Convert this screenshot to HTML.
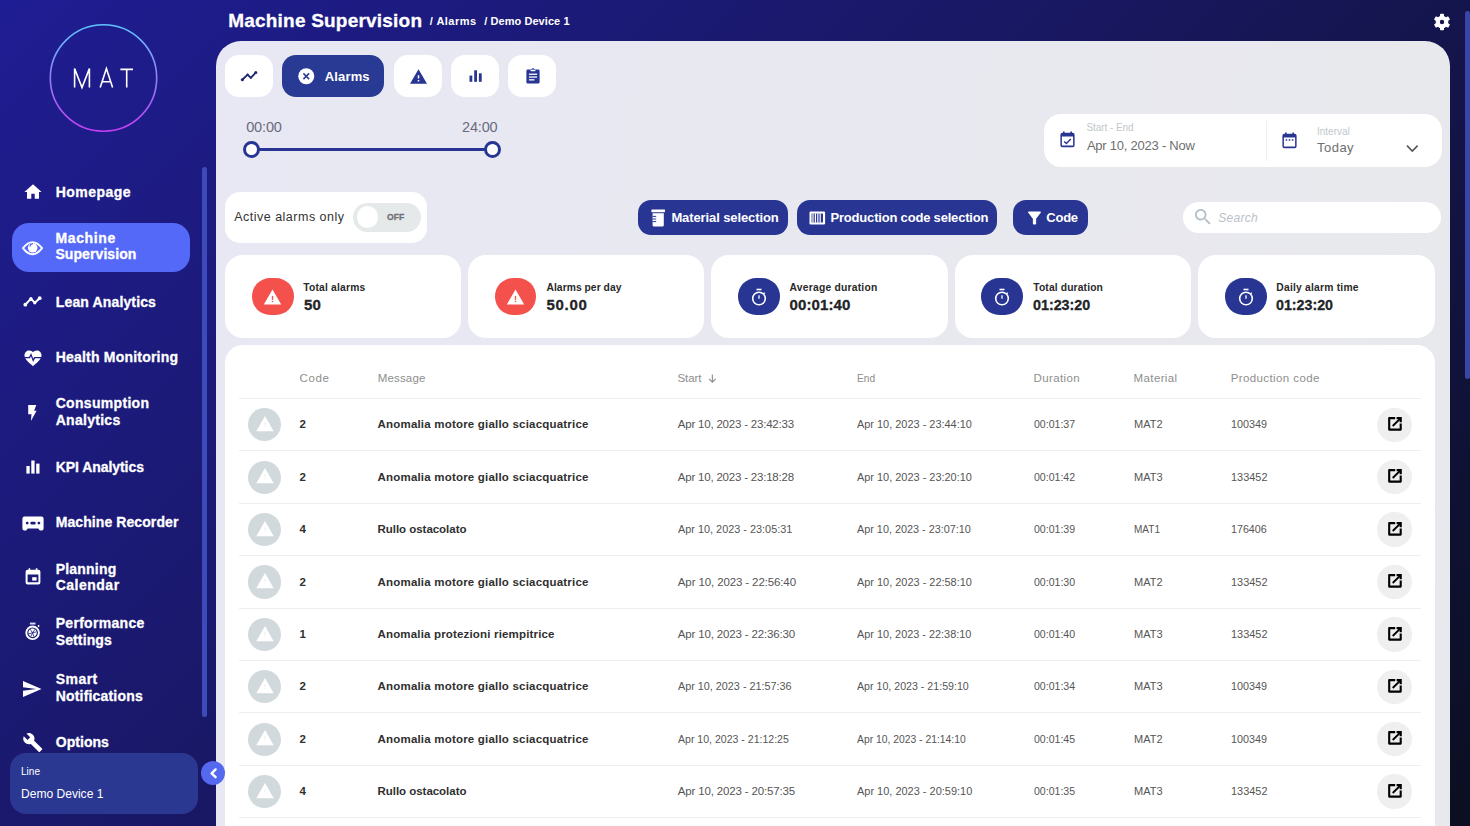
<!DOCTYPE html>
<html><head><meta charset="utf-8">
<style>
*{margin:0;padding:0;box-sizing:border-box}
html,body{width:1470px;height:826px;overflow:hidden}
body{position:relative;font-family:"Liberation Sans",sans-serif;background:linear-gradient(135deg,#1f1d93 0%,#18175e 50%,#0b0f20 100%);}
.a{position:absolute}
.t{position:absolute;white-space:nowrap}
.s{position:absolute;overflow:visible}
.panel{position:absolute;left:216px;top:41px;width:1234px;height:800px;background:linear-gradient(100deg,#e7e8f3 0%,#e8e8f0 50%,#e8e9ec 100%);border-radius:25px 25px 0 0}
.wbtn{position:absolute;top:55px;width:48px;height:42px;background:#fff;border-radius:14px}
.card{position:absolute;background:#fff;border-radius:18px}
.fbtn{position:absolute;top:200px;height:35px;background:#283593;border-radius:13px}
.sep{position:absolute;left:239px;width:1182px;height:1px;background:#eceff1}
.ric{position:absolute;left:247px;width:34px;height:34px;border-radius:50%;background:#d2d9dd}
.ebtn{position:absolute;left:1377.5px;width:34.5px;height:34.5px;border-radius:50%;background:#efefef}
</style></head><body>

<svg class="s" style="left:0;top:0" width="210" height="160">
<defs><linearGradient id="lg" x1="0" y1="0" x2="0" y2="1"><stop offset="0" stop-color="#5ec4ff"/><stop offset="1" stop-color="#c53cf2"/></linearGradient></defs>
<circle cx="103.5" cy="78" r="53.2" fill="none" stroke="url(#lg)" stroke-width="1.6"/>
<g stroke="#fff" stroke-width="1.6" fill="none" stroke-linejoin="miter" stroke-linecap="butt">
<path d="M74.6 87.6V68.6L82 87.6 89.4 68.6V87.6"/>
<path d="M100.2 87.6L106.4 68.6 112.6 87.6M102.4 81.8H110.4"/>
<path d="M120.4 69.4H133M126.7 69.4V87.6"/>
</g>
</svg>
<div class="a" style="left:202px;top:167px;width:5px;height:550px;background:#3d4ab9;border-radius:3px"></div>
<div class="a" style="left:12.3px;top:223.1px;width:177.9px;height:48.5px;background:#5569f8;border-radius:17px"></div>
<svg class="s" style="left:23.5px;top:182.5px" width="18" height="17" viewBox="1.5 2.5 21 18" fill="#fff"><path d="M10 20v-6h4v6h5v-8h3L12 3 2 12h3v8z"/></svg>
<svg class="s" style="left:0;top:230px" width="50" height="30"><g transform="translate(0,-230)"><path d="M22.9 248.2Q32.5 236 42.1 248.2Q32.5 260.4 22.9 248.2Z" stroke="#fff" stroke-width="1.9" fill="none" stroke-linejoin="round"/><circle cx="32.7" cy="247.8" r="4.8" fill="#fff"/><path d="M30 246.2A3.2 3.2 0 0 1 32.6 243.6" stroke="#5468f0" stroke-width="1.2" fill="none" stroke-linecap="round"/></g></svg>
<svg class="s" style="left:0;top:280px" width="50" height="40"><g transform="translate(0,-280)"><path d="M25.3 304.7L30.9 298.6 34.8 302.8 39.7 298.2" stroke="#fff" stroke-width="2" fill="none" stroke-linejoin="round"/><circle cx="25.3" cy="304.7" r="1.9" fill="#fff"/><circle cx="30.9" cy="298.6" r="1.6" fill="#fff"/><circle cx="34.8" cy="302.8" r="1.6" fill="#fff"/><circle cx="39.7" cy="298.2" r="1.9" fill="#fff"/></g></svg>
<svg class="s" style="left:23.5px;top:350px" width="18" height="17" viewBox="0 0 18 17"><path d="M9 16.2L7.8 15.1C3.4 11.2 0.5 8.6 0.5 5.2 0.5 2.5 2.6 0.4 5.3 0.4c1.5 0 2.9.7 3.7 1.8C9.8 1.1 11.2.4 12.7.4c2.7 0 4.8 2.1 4.8 4.8 0 3.4-2.9 6-7.3 9.9z" fill="#fff"/><path d="M0.5 7.6H5.6L7 4.6 9.2 10.4 10.6 7.6H17.5" stroke="#1e1c86" stroke-width="1.3" fill="none"/></svg>
<svg class="s" style="left:0;top:400px" width="50" height="25"><g transform="translate(0,-400)"><path d="M28.2 405H36.3L34.1 410.8H36.6L30.9 421.1 31.5 414.3H28.2Z" fill="#fff"/></g></svg>
<svg class="s" style="left:25.5px;top:459.5px" width="14" height="14"><rect x="0.4" y="6" width="3.3" height="7.6" fill="#fff"/><rect x="5.3" y="0.5" width="3.3" height="13.1" fill="#fff"/><rect x="10.2" y="3.6" width="3.3" height="10" fill="#fff"/></svg>
<svg class="s" style="left:21.5px;top:515.5px" width="22" height="15" viewBox="0 0 22 15"><path d="M2.5 0.4H19.5A2.1 2.1 0 0 1 21.6 2.5V12.6A2 2 0 0 1 19.6 14.6H17.8L16.3 12.4H5.7L4.2 14.6H2.4A2 2 0 0 1 0.4 12.6V2.5A2.1 2.1 0 0 1 2.5 0.4z" fill="#fff"/><circle cx="5.2" cy="7.1" r="1.4" fill="#1c1a7c"/><circle cx="16.9" cy="7.1" r="1.4" fill="#1c1a7c"/><rect x="8.4" y="5.7" width="5.2" height="2.8" rx="1.2" fill="#1c1a7c"/></svg>
<svg class="s" style="left:25px;top:567.5px" width="16" height="17" viewBox="0 0 16 17"><path d="M3.6 0.3H5.2V1.8H10.8V0.3H12.4V1.8H13.4A2 2 0 0 1 15.4 3.8V14.4A2 2 0 0 1 13.4 16.4H2.6A2 2 0 0 1 0.6 14.4V3.8A2 2 0 0 1 2.6 1.8H3.6z M2.6 6.4V14.2H13.4V6.4z" fill="#fff" fill-rule="evenodd"/><rect x="7.2" y="9.2" width="4.4" height="3.4" fill="#fff"/></svg>
<svg class="s" style="left:24px;top:622px" width="18" height="18" viewBox="0 0 18 18"><rect x="5.9" y="0.6" width="5.6" height="1.9" fill="#d8dcff"/><circle cx="8.6" cy="10.8" r="6.3" stroke="#fff" stroke-width="1.9" fill="none"/><path d="M14 4.6l1.2-1.2" stroke="#fff" stroke-width="1.6"/><circle cx="8.6" cy="10.8" r="4.2" fill="#fff"/><path d="M8.6 10.8L6.2 7.3M8.6 10.8L12.6 9.8M8.6 10.8L9.8 14.6M8.6 10.8L4.6 11.8M8.6 10.8L11 7.3M8.6 10.8L6.8 14.5" stroke="#1c1a7c" stroke-width="0.8"/></svg>
<svg class="s" style="left:23.3px;top:680.5px" width="18.5" height="16" viewBox="2 3 21 18" fill="#fff"><path d="M2.01 21L23 12 2.01 3 2 10l15 2-15 2z"/></svg>
<svg class="s" style="left:22.5px;top:732.5px" width="19.5" height="19" viewBox="1 1 22 22" fill="#fff"><path d="M22.7 19l-9.1-9.1c.9-2.3.4-5-1.5-6.9-2-2-5-2.4-7.4-1.3L9 6 6 9 1.6 4.7C.4 7.1.9 10.1 2.9 12.1c1.9 1.9 4.6 2.4 6.9 1.5l9.1 9.1c.4.4 1 .4 1.4 0l2.3-2.3c.5-.4.5-1.1.1-1.4z"/></svg>
<div class="a" style="left:9.5px;top:752.6px;width:188px;height:61px;background:#2b3892;border-radius:16px"></div>
<div class="a" style="left:1465px;top:11px;width:5px;height:368px;background:#3a45a8;border-radius:3px"></div>
<svg class="s" style="left:1425.5px;top:5.7px" width="32" height="32"><g transform="translate(16,16)" fill="#fff"><path fill-rule="evenodd" d="M0 -6.3A6.3 6.3 0 1 1 0 6.3A6.3 6.3 0 1 1 0 -6.3zM0 -2.2A2.2 2.2 0 1 0 0 2.2A2.2 2.2 0 1 0 0 -2.2z"/><rect x="-2" y="-8.2" width="4" height="4.5" rx="0.8" transform="rotate(0)"/><rect x="-2" y="-8.2" width="4" height="4.5" rx="0.8" transform="rotate(60)"/><rect x="-2" y="-8.2" width="4" height="4.5" rx="0.8" transform="rotate(120)"/><rect x="-2" y="-8.2" width="4" height="4.5" rx="0.8" transform="rotate(180)"/><rect x="-2" y="-8.2" width="4" height="4.5" rx="0.8" transform="rotate(240)"/><rect x="-2" y="-8.2" width="4" height="4.5" rx="0.8" transform="rotate(300)"/></g></svg>
<div class="panel"></div>
<div class="a" style="left:200.5px;top:760.5px;width:24.5px;height:24.5px;border-radius:50%;background:#5468f0"></div>
<svg class="s" style="left:200.5px;top:760.5px" width="25" height="25"><path d="M14.6 8.4L10.6 12.3 14.6 16.2" stroke="#fff" stroke-width="2.4" fill="none" stroke-linecap="round" stroke-linejoin="round"/></svg>
<div class="wbtn" style="left:225.3px"></div>
<div class="wbtn" style="left:282px;width:102px;background:#293a94"></div>
<div class="wbtn" style="left:393.6px"></div>
<div class="wbtn" style="left:451px"></div>
<div class="wbtn" style="left:508.3px"></div>
<svg class="s" style="left:240px;top:69px" width="18" height="14"><path d="M2.3 10.8L7.6 5.6 10.8 8.8 15.8 3.6" stroke="#1f2a6b" stroke-width="1.9" fill="none" stroke-linejoin="round"/><circle cx="2.3" cy="10.8" r="1.5" fill="#1f2a6b"/><circle cx="15.8" cy="3.6" r="1.5" fill="#1f2a6b"/><circle cx="7.6" cy="5.6" r="1" fill="#1f2a6b"/><circle cx="10.8" cy="8.8" r="1" fill="#1f2a6b"/></svg>
<svg class="s" style="left:298.3px;top:68.2px" width="16.5" height="16.5" viewBox="0 0 16.5 16.5"><circle cx="8.25" cy="8.25" r="8" fill="#fff"/><path d="M5.4 5.4L11.1 11.1M11.1 5.4L5.4 11.1" stroke="#293a94" stroke-width="1.5"/></svg>
<svg class="s" style="left:409.5px;top:68.5px" width="17" height="15" viewBox="1 2 22 19" fill="#283593"><path d="M1 21h22L12 2 1 21zm12-3h-2v-2h2v2zm0-4h-2v-4h2v4z"/></svg>
<svg class="s" style="left:469px;top:70px" width="13" height="12"><rect x="0.5" y="5.6" width="2.8" height="6.2" fill="#283593"/><rect x="5.2" y="0.3" width="2.8" height="11.5" fill="#283593"/><rect x="9.9" y="3.3" width="2.8" height="8.5" fill="#283593"/></svg>
<svg class="s" style="left:525.5px;top:68px" width="14" height="16" viewBox="0 0 14 16"><path fill="#283593" d="M1.8 1.6H4.8L7 0 9.2 1.6H12.2A1.4 1.4 0 0 1 13.6 3V14.2A1.4 1.4 0 0 1 12.2 15.6H1.8A1.4 1.4 0 0 1 .4 14.2V3A1.4 1.4 0 0 1 1.8 1.6z"/><rect x="2.9" y="5.6" width="8.2" height="1.3" fill="#fff"/><rect x="2.9" y="8.4" width="8.2" height="1.3" fill="#fff"/><rect x="2.9" y="11.2" width="5.6" height="1.3" fill="#fff"/><rect x="4.6" y="1.7" width="4.8" height="1.5" fill="#fff"/></svg>
<div class="a" style="left:251px;top:147.6px;width:241px;height:3.4px;background:#283593"></div>
<div class="a" style="left:243px;top:141px;width:16.8px;height:16.8px;border-radius:50%;border:3.3px solid #283593;background:#fff"></div>
<div class="a" style="left:484px;top:141px;width:16.8px;height:16.8px;border-radius:50%;border:3.3px solid #283593;background:#fff"></div>
<div class="card" style="left:1043.5px;top:114px;width:398px;height:53px;border-radius:17px"></div>
<div class="a" style="left:1265.5px;top:120.5px;width:1px;height:40.5px;background:#efefef"></div>
<svg class="s" style="left:1059.5px;top:131px" width="15" height="17" viewBox="0 0 15 17"><path fill="#283593" fill-rule="evenodd" d="M3 .4H4.6V1.8H10.4V.4H12V1.8H12.6A2 2 0 0 1 14.6 3.8V14.2A2 2 0 0 1 12.6 16.2H2.4A2 2 0 0 1 .4 14.2V3.8A2 2 0 0 1 2.4 1.8H3z M1.9 5.6V14.6H13.1V5.6z"/><path d="M4.2 10.4L6.4 12.5 10.8 8" stroke="#283593" stroke-width="1.4" fill="none"/></svg>
<svg class="s" style="left:1281.5px;top:131.5px" width="15" height="17" viewBox="0 0 15 17"><path fill="#283593" fill-rule="evenodd" d="M3 .4H4.6V1.8H10.4V.4H12V1.8H12.6A2 2 0 0 1 14.6 3.8V14.2A2 2 0 0 1 12.6 16.2H2.4A2 2 0 0 1 .4 14.2V3.8A2 2 0 0 1 2.4 1.8H3z M1.9 5.6V14.6H13.1V5.6z"/><rect x="3.6" y="7.2" width="1.6" height="1.5" fill="#283593"/><rect x="6.7" y="7.2" width="1.6" height="1.5" fill="#283593"/><rect x="9.8" y="7.2" width="1.6" height="1.5" fill="#283593"/></svg>
<svg class="s" style="left:1405px;top:143px" width="15" height="11"><path d="M2 2.6L7.3 8 12.6 2.6" stroke="#555" stroke-width="1.6" fill="none"/></svg>
<div class="card" style="left:225.2px;top:191.7px;width:202px;height:51.3px;border-radius:15px"></div>
<div class="a" style="left:352.8px;top:203.1px;width:68.6px;height:28.8px;border-radius:14.4px;background:#e6e9ea"></div>
<div class="a" style="left:356.6px;top:206.4px;width:21.6px;height:21.6px;border-radius:50%;background:#fff"></div>
<div class="fbtn" style="left:638px;width:150px"></div>
<div class="fbtn" style="left:797px;width:200px"></div>
<div class="fbtn" style="left:1013px;width:75px"></div>
<svg class="s" style="left:650.5px;top:208.5px" width="15" height="18" viewBox="0 0 15 18"><rect x="0.4" y="0.4" width="13.6" height="2.8" rx="0.6" fill="#fff"/><path d="M1.6 4.2H12.8V16.2A1.4 1.4 0 0 1 11.4 17.6H3A1.4 1.4 0 0 1 1.6 16.2z" fill="#fff"/><path d="M1.6 7.4H5.2M1.6 10H5.2M1.6 12.6H5.2" stroke="#283593" stroke-width="1"/></svg>
<svg class="s" style="left:808.5px;top:210.5px" width="17" height="14" viewBox="0 0 17 14"><rect x="0.5" y="0.5" width="15.6" height="13" rx="1.2" fill="#fff"/><rect x="2.6" y="2.6" width="11.4" height="8.8" fill="#283593"/><path d="M4 2.6V11.4M6.4 2.6V11.4M8.8 2.6V11.4M11.2 2.6V11.4" stroke="#fff" stroke-width="1.2"/></svg>
<svg class="s" style="left:1028px;top:210.5px" width="13" height="14" viewBox="4 4 16 16" fill="#fff"><path d="M4.25 5.61C6.27 8.2 10 13 10 13v6c0 .55.45 1 1 1h2c.55 0 1-.45 1-1v-6s3.72-4.8 5.74-7.39c.51-.66.04-1.61-.79-1.61H5.04c-.83 0-1.3.95-.79 1.61z"/></svg>
<div class="card" style="left:1183px;top:202px;width:258px;height:31.2px;border-radius:15.6px"></div>
<svg class="s" style="left:1194.5px;top:208.5px" width="15.5" height="15.5" viewBox="3 3 17.5 17.5" fill="#b3bfc6"><path d="M15.5 14h-.79l-.28-.27C15.41 12.59 16 11.11 16 9.5 16 5.91 13.09 3 9.5 3S3 5.91 3 9.5 5.91 16 9.5 16c1.61 0 3.09-.59 4.23-1.57l.27.28v.79l5 4.99L20.49 19l-4.99-5zm-6 0C7.01 14 5 11.99 5 9.5S7.01 5 9.5 5 14 7.01 14 9.5 11.99 14 9.5 14z"/></svg>
<div class="card" style="left:225.2px;top:255.2px;width:236px;height:82.8px"></div>
<div class="card" style="left:468px;top:255.2px;width:236.3px;height:82.8px"></div>
<div class="card" style="left:711px;top:255.2px;width:237px;height:82.8px"></div>
<div class="card" style="left:954.7px;top:255.2px;width:236.5px;height:82.8px"></div>
<div class="card" style="left:1198px;top:255.2px;width:236.5px;height:82.8px"></div>
<div class="a" style="left:252px;top:278.3px;width:41.7px;height:36.5px;border-radius:18.2px;background:#f4514c"></div>
<svg class="s" style="left:263.35px;top:288.55px" width="19" height="17" viewBox="0 0 19 17"><path d="M9.5 0.55L18.2 15.55H0.8z" fill="#fff"/><rect x="8.85" y="6.9" width="1.3" height="4" fill="#f4514c"/><rect x="8.85" y="11.9" width="1.3" height="1.3" fill="#f4514c"/></svg>
<div class="a" style="left:494.7px;top:278.3px;width:41.7px;height:36.5px;border-radius:18.2px;background:#f4514c"></div>
<svg class="s" style="left:506.05px;top:288.55px" width="19" height="17" viewBox="0 0 19 17"><path d="M9.5 0.55L18.2 15.55H0.8z" fill="#fff"/><rect x="8.85" y="6.9" width="1.3" height="4" fill="#f4514c"/><rect x="8.85" y="11.9" width="1.3" height="1.3" fill="#f4514c"/></svg>
<div class="a" style="left:738.2px;top:278.3px;width:41.7px;height:36.5px;border-radius:18.2px;background:#283593"></div>
<svg class="s" style="left:750.05px;top:287.55px" width="18" height="18" viewBox="0 0 18 18"><rect x="6.5" y="0.7" width="5" height="1.6" fill="#fff"/><circle cx="9" cy="10.5" r="6.3" stroke="#fff" stroke-width="1.6" fill="none"/><path d="M9 10.8V7.2" stroke="#fff" stroke-width="1.3"/><path d="M13.6 5.9l1.2-1.2" stroke="#fff" stroke-width="1.3"/></svg>
<div class="a" style="left:981.4px;top:278.3px;width:41.7px;height:36.5px;border-radius:18.2px;background:#283593"></div>
<svg class="s" style="left:993.25px;top:287.55px" width="18" height="18" viewBox="0 0 18 18"><rect x="6.5" y="0.7" width="5" height="1.6" fill="#fff"/><circle cx="9" cy="10.5" r="6.3" stroke="#fff" stroke-width="1.6" fill="none"/><path d="M9 10.8V7.2" stroke="#fff" stroke-width="1.3"/><path d="M13.6 5.9l1.2-1.2" stroke="#fff" stroke-width="1.3"/></svg>
<div class="a" style="left:1225.1px;top:278.3px;width:41.7px;height:36.5px;border-radius:18.2px;background:#283593"></div>
<svg class="s" style="left:1236.95px;top:287.55px" width="18" height="18" viewBox="0 0 18 18"><rect x="6.5" y="0.7" width="5" height="1.6" fill="#fff"/><circle cx="9" cy="10.5" r="6.3" stroke="#fff" stroke-width="1.6" fill="none"/><path d="M9 10.8V7.2" stroke="#fff" stroke-width="1.3"/><path d="M13.6 5.9l1.2-1.2" stroke="#fff" stroke-width="1.3"/></svg>
<div class="card" style="left:225.3px;top:344.5px;width:1209.7px;height:520px"></div>
<svg class="s" style="left:707.7px;top:374.4px" width="9" height="9"><path d="M4.35 0.4V8.2M1 4.9L4.35 8.2 7.7 4.9" stroke="#8e8e8e" stroke-width="1.15" fill="none"/></svg>
<div class="sep" style="top:398.00px"></div>
<div class="sep" style="top:450.41px"></div>
<div class="sep" style="top:502.82px"></div>
<div class="sep" style="top:555.23px"></div>
<div class="sep" style="top:607.64px"></div>
<div class="sep" style="top:660.05px"></div>
<div class="sep" style="top:712.46px"></div>
<div class="sep" style="top:764.87px"></div>
<div class="sep" style="top:817.28px"></div>
<div class="ric" style="left:247.6px;width:33.2px;height:33.2px;top:408.15px"></div>
<svg class="s" style="left:254.6px;top:414.90px" width="20" height="17" viewBox="0 0 20 17"><path d="M10 1L18.7 16.2H1.3z" fill="#fff"/><rect x="9.6" y="7.2" width="0.8" height="2.6" fill="#dfe4e7"/><rect x="9.6" y="11.1" width="0.8" height="0.9" fill="#dfe4e7"/></svg>
<div class="ebtn" style="left:1377.4px;width:34.4px;height:34.4px;top:407.55px"></div>
<svg class="s" style="left:1386px;top:415.00px" width="18" height="18" viewBox="0 0 18 18"><path d="M9.2 3.1H3.2V14.6H14.7V8.5" stroke="#000" stroke-width="2.1" fill="none" stroke-linejoin="round"/><path d="M10.6 3.1H14.7V7.2" stroke="#000" stroke-width="2.2" fill="none"/><path d="M6.7 11L14.2 3.6" stroke="#000" stroke-width="1.9" fill="none"/></svg>
<div class="ric" style="left:247.6px;width:33.2px;height:33.2px;top:460.56px"></div>
<svg class="s" style="left:254.6px;top:467.31px" width="20" height="17" viewBox="0 0 20 17"><path d="M10 1L18.7 16.2H1.3z" fill="#fff"/><rect x="9.6" y="7.2" width="0.8" height="2.6" fill="#dfe4e7"/><rect x="9.6" y="11.1" width="0.8" height="0.9" fill="#dfe4e7"/></svg>
<div class="ebtn" style="left:1377.4px;width:34.4px;height:34.4px;top:459.96px"></div>
<svg class="s" style="left:1386px;top:467.41px" width="18" height="18" viewBox="0 0 18 18"><path d="M9.2 3.1H3.2V14.6H14.7V8.5" stroke="#000" stroke-width="2.1" fill="none" stroke-linejoin="round"/><path d="M10.6 3.1H14.7V7.2" stroke="#000" stroke-width="2.2" fill="none"/><path d="M6.7 11L14.2 3.6" stroke="#000" stroke-width="1.9" fill="none"/></svg>
<div class="ric" style="left:247.6px;width:33.2px;height:33.2px;top:512.97px"></div>
<svg class="s" style="left:254.6px;top:519.72px" width="20" height="17" viewBox="0 0 20 17"><path d="M10 1L18.7 16.2H1.3z" fill="#fff"/><rect x="9.6" y="7.2" width="0.8" height="2.6" fill="#dfe4e7"/><rect x="9.6" y="11.1" width="0.8" height="0.9" fill="#dfe4e7"/></svg>
<div class="ebtn" style="left:1377.4px;width:34.4px;height:34.4px;top:512.37px"></div>
<svg class="s" style="left:1386px;top:519.82px" width="18" height="18" viewBox="0 0 18 18"><path d="M9.2 3.1H3.2V14.6H14.7V8.5" stroke="#000" stroke-width="2.1" fill="none" stroke-linejoin="round"/><path d="M10.6 3.1H14.7V7.2" stroke="#000" stroke-width="2.2" fill="none"/><path d="M6.7 11L14.2 3.6" stroke="#000" stroke-width="1.9" fill="none"/></svg>
<div class="ric" style="left:247.6px;width:33.2px;height:33.2px;top:565.38px"></div>
<svg class="s" style="left:254.6px;top:572.13px" width="20" height="17" viewBox="0 0 20 17"><path d="M10 1L18.7 16.2H1.3z" fill="#fff"/><rect x="9.6" y="7.2" width="0.8" height="2.6" fill="#dfe4e7"/><rect x="9.6" y="11.1" width="0.8" height="0.9" fill="#dfe4e7"/></svg>
<div class="ebtn" style="left:1377.4px;width:34.4px;height:34.4px;top:564.78px"></div>
<svg class="s" style="left:1386px;top:572.23px" width="18" height="18" viewBox="0 0 18 18"><path d="M9.2 3.1H3.2V14.6H14.7V8.5" stroke="#000" stroke-width="2.1" fill="none" stroke-linejoin="round"/><path d="M10.6 3.1H14.7V7.2" stroke="#000" stroke-width="2.2" fill="none"/><path d="M6.7 11L14.2 3.6" stroke="#000" stroke-width="1.9" fill="none"/></svg>
<div class="ric" style="left:247.6px;width:33.2px;height:33.2px;top:617.79px"></div>
<svg class="s" style="left:254.6px;top:624.54px" width="20" height="17" viewBox="0 0 20 17"><path d="M10 1L18.7 16.2H1.3z" fill="#fff"/><rect x="9.6" y="7.2" width="0.8" height="2.6" fill="#dfe4e7"/><rect x="9.6" y="11.1" width="0.8" height="0.9" fill="#dfe4e7"/></svg>
<div class="ebtn" style="left:1377.4px;width:34.4px;height:34.4px;top:617.19px"></div>
<svg class="s" style="left:1386px;top:624.64px" width="18" height="18" viewBox="0 0 18 18"><path d="M9.2 3.1H3.2V14.6H14.7V8.5" stroke="#000" stroke-width="2.1" fill="none" stroke-linejoin="round"/><path d="M10.6 3.1H14.7V7.2" stroke="#000" stroke-width="2.2" fill="none"/><path d="M6.7 11L14.2 3.6" stroke="#000" stroke-width="1.9" fill="none"/></svg>
<div class="ric" style="left:247.6px;width:33.2px;height:33.2px;top:670.20px"></div>
<svg class="s" style="left:254.6px;top:676.95px" width="20" height="17" viewBox="0 0 20 17"><path d="M10 1L18.7 16.2H1.3z" fill="#fff"/><rect x="9.6" y="7.2" width="0.8" height="2.6" fill="#dfe4e7"/><rect x="9.6" y="11.1" width="0.8" height="0.9" fill="#dfe4e7"/></svg>
<div class="ebtn" style="left:1377.4px;width:34.4px;height:34.4px;top:669.60px"></div>
<svg class="s" style="left:1386px;top:677.05px" width="18" height="18" viewBox="0 0 18 18"><path d="M9.2 3.1H3.2V14.6H14.7V8.5" stroke="#000" stroke-width="2.1" fill="none" stroke-linejoin="round"/><path d="M10.6 3.1H14.7V7.2" stroke="#000" stroke-width="2.2" fill="none"/><path d="M6.7 11L14.2 3.6" stroke="#000" stroke-width="1.9" fill="none"/></svg>
<div class="ric" style="left:247.6px;width:33.2px;height:33.2px;top:722.61px"></div>
<svg class="s" style="left:254.6px;top:729.36px" width="20" height="17" viewBox="0 0 20 17"><path d="M10 1L18.7 16.2H1.3z" fill="#fff"/><rect x="9.6" y="7.2" width="0.8" height="2.6" fill="#dfe4e7"/><rect x="9.6" y="11.1" width="0.8" height="0.9" fill="#dfe4e7"/></svg>
<div class="ebtn" style="left:1377.4px;width:34.4px;height:34.4px;top:722.01px"></div>
<svg class="s" style="left:1386px;top:729.46px" width="18" height="18" viewBox="0 0 18 18"><path d="M9.2 3.1H3.2V14.6H14.7V8.5" stroke="#000" stroke-width="2.1" fill="none" stroke-linejoin="round"/><path d="M10.6 3.1H14.7V7.2" stroke="#000" stroke-width="2.2" fill="none"/><path d="M6.7 11L14.2 3.6" stroke="#000" stroke-width="1.9" fill="none"/></svg>
<div class="ric" style="left:247.6px;width:33.2px;height:33.2px;top:775.02px"></div>
<svg class="s" style="left:254.6px;top:781.77px" width="20" height="17" viewBox="0 0 20 17"><path d="M10 1L18.7 16.2H1.3z" fill="#fff"/><rect x="9.6" y="7.2" width="0.8" height="2.6" fill="#dfe4e7"/><rect x="9.6" y="11.1" width="0.8" height="0.9" fill="#dfe4e7"/></svg>
<div class="ebtn" style="left:1377.4px;width:34.4px;height:34.4px;top:774.42px"></div>
<svg class="s" style="left:1386px;top:781.87px" width="18" height="18" viewBox="0 0 18 18"><path d="M9.2 3.1H3.2V14.6H14.7V8.5" stroke="#000" stroke-width="2.1" fill="none" stroke-linejoin="round"/><path d="M10.6 3.1H14.7V7.2" stroke="#000" stroke-width="2.2" fill="none"/><path d="M6.7 11L14.2 3.6" stroke="#000" stroke-width="1.9" fill="none"/></svg>
<div class="t" style="-webkit-text-stroke:0.3px #fff;left:55.80px;top:185.00px;font-size:14px;line-height:14px;font-weight:bold;letter-spacing:0.457px;color:#fff;">Homepage</div>
<div class="t" style="-webkit-text-stroke:0.3px #fff;left:55.40px;top:231.00px;font-size:14px;line-height:14px;font-weight:bold;letter-spacing:0.650px;color:#fff;">Machine</div>
<div class="t" style="-webkit-text-stroke:0.3px #fff;left:55.40px;top:247.00px;font-size:14px;line-height:14px;font-weight:bold;letter-spacing:0.090px;color:#fff;">Supervision</div>
<div class="t" style="-webkit-text-stroke:0.3px #fff;left:55.80px;top:295.00px;font-size:14px;line-height:14px;font-weight:bold;letter-spacing:0.138px;color:#fff;">Lean Analytics</div>
<div class="t" style="-webkit-text-stroke:0.3px #fff;left:55.70px;top:350.00px;font-size:14px;line-height:14px;font-weight:bold;letter-spacing:0.206px;color:#fff;">Health Monitoring</div>
<div class="t" style="-webkit-text-stroke:0.3px #fff;left:55.70px;top:396.00px;font-size:14px;line-height:14px;font-weight:bold;letter-spacing:0.310px;color:#fff;">Consumption</div>
<div class="t" style="-webkit-text-stroke:0.3px #fff;left:55.70px;top:413.00px;font-size:14px;line-height:14px;font-weight:bold;letter-spacing:0.287px;color:#fff;">Analytics</div>
<div class="t" style="-webkit-text-stroke:0.3px #fff;left:55.70px;top:460.00px;font-size:14px;line-height:14px;font-weight:bold;letter-spacing:-0.058px;color:#fff;">KPI Analytics</div>
<div class="t" style="-webkit-text-stroke:0.3px #fff;left:55.70px;top:515.00px;font-size:14px;line-height:14px;font-weight:bold;letter-spacing:0.087px;color:#fff;">Machine Recorder</div>
<div class="t" style="-webkit-text-stroke:0.3px #fff;left:55.70px;top:562.00px;font-size:14px;line-height:14px;font-weight:bold;letter-spacing:0.214px;color:#fff;">Planning</div>
<div class="t" style="-webkit-text-stroke:0.3px #fff;left:55.70px;top:578.00px;font-size:14px;line-height:14px;font-weight:bold;letter-spacing:0.500px;color:#fff;">Calendar</div>
<div class="t" style="-webkit-text-stroke:0.3px #fff;left:55.70px;top:616.00px;font-size:14px;line-height:14px;font-weight:bold;letter-spacing:0.300px;color:#fff;">Performance</div>
<div class="t" style="-webkit-text-stroke:0.3px #fff;left:55.70px;top:633.00px;font-size:14px;line-height:14px;font-weight:bold;letter-spacing:0.129px;color:#fff;">Settings</div>
<div class="t" style="-webkit-text-stroke:0.3px #fff;left:55.70px;top:672.00px;font-size:14px;line-height:14px;font-weight:bold;letter-spacing:0.475px;color:#fff;">Smart</div>
<div class="t" style="-webkit-text-stroke:0.3px #fff;left:55.70px;top:689.00px;font-size:14px;line-height:14px;font-weight:bold;letter-spacing:0.183px;color:#fff;">Notifications</div>
<div class="t" style="-webkit-text-stroke:0.3px #fff;left:55.80px;top:735.00px;font-size:14px;line-height:14px;font-weight:bold;letter-spacing:0.033px;color:#fff;">Options</div>
<div class="t" style="left:20.90px;top:766.00px;font-size:10.5px;line-height:10.5px;font-weight:normal;letter-spacing:0.000px;color:#fff;transform:scaleX(0.9550);transform-origin:0 0;">Line</div>
<div class="t" style="left:21.20px;top:787.00px;font-size:13px;line-height:13px;font-weight:normal;letter-spacing:0.000px;color:#fff;transform:scaleX(0.9270);transform-origin:0 0;">Demo Device 1</div>
<div class="t" style="-webkit-text-stroke:0.3px #fff;left:228.20px;top:11.00px;font-size:19px;line-height:19px;font-weight:bold;letter-spacing:0.211px;color:#fff;">Machine Supervision</div>
<div class="t" style="left:429.80px;top:16.00px;font-size:11px;line-height:11px;font-weight:bold;letter-spacing:0.457px;color:#fff;/*nostroke*/">/ Alarms</div>
<div class="t" style="left:484.20px;top:16.00px;font-size:11px;line-height:11px;font-weight:bold;letter-spacing:0.071px;color:#fff;/*nostroke*/">/ Demo Device 1</div>
<div class="t" style="left:324.80px;top:70.00px;font-size:13px;line-height:13px;font-weight:bold;letter-spacing:0.140px;color:#fff;/*nostroke*/">Alarms</div>
<div class="t" style="left:246.20px;top:120.00px;font-size:14.5px;line-height:14.5px;font-weight:normal;letter-spacing:-0.150px;color:#6b6b7e;">00:00</div>
<div class="t" style="left:462.00px;top:120.00px;font-size:14.5px;line-height:14.5px;font-weight:normal;letter-spacing:-0.150px;color:#6b6b7e;">24:00</div>
<div class="t" style="left:1086.40px;top:123.00px;font-size:10px;line-height:10px;font-weight:normal;letter-spacing:-0.060px;color:#c3c7cb;">Start - End</div>
<div class="t" style="left:1086.90px;top:139.00px;font-size:13px;line-height:13px;font-weight:normal;letter-spacing:-0.235px;color:#6e6e6e;">Apr 10, 2023 - Now</div>
<div class="t" style="left:1316.90px;top:127.00px;font-size:10px;line-height:10px;font-weight:normal;letter-spacing:0.014px;color:#c3c7cb;">Interval</div>
<div class="t" style="left:1317.00px;top:141.00px;font-size:13px;line-height:13px;font-weight:normal;letter-spacing:0.475px;color:#6e6e6e;">Today</div>
<div class="t" style="left:234.20px;top:211.00px;font-size:12.5px;line-height:12.5px;font-weight:normal;letter-spacing:0.494px;color:#333333;">Active alarms only</div>
<div class="t" style="-webkit-text-stroke:0.3px #6f7275;left:386.50px;top:213.00px;font-size:9.3px;line-height:9.3px;font-weight:bold;letter-spacing:0.000px;color:#6f7275;transform:scaleX(0.9263);transform-origin:0 0;">OFF</div>
<div class="t" style="left:671.40px;top:211.00px;font-size:13px;line-height:13px;font-weight:bold;letter-spacing:-0.106px;color:#fff;/*nostroke*/">Material selection</div>
<div class="t" style="left:830.50px;top:211.00px;font-size:13px;line-height:13px;font-weight:bold;letter-spacing:-0.192px;color:#fff;/*nostroke*/">Production code selection</div>
<div class="t" style="left:1046.30px;top:211.00px;font-size:13px;line-height:13px;font-weight:bold;letter-spacing:-0.233px;color:#fff;/*nostroke*/">Code</div>
<div class="t" style="left:1218.20px;top:212.00px;font-size:12px;line-height:12px;font-weight:normal;font-style:italic;letter-spacing:0.280px;color:#b9c1c8;">Search</div>
<div class="t" style="left:303.20px;top:283.00px;font-size:10.3px;line-height:10.3px;font-weight:bold;letter-spacing:0.200px;color:#2a2a2a;/*nostroke*/">Total alarms</div>
<div class="t" style="-webkit-text-stroke:0.3px #222428;left:303.90px;top:297.00px;font-size:15px;line-height:15px;font-weight:bold;letter-spacing:0.200px;color:#222428;">50</div>
<div class="t" style="left:546.50px;top:283.00px;font-size:10.3px;line-height:10.3px;font-weight:bold;letter-spacing:0.038px;color:#2a2a2a;/*nostroke*/">Alarms per day</div>
<div class="t" style="-webkit-text-stroke:0.3px #222428;left:546.50px;top:297.00px;font-size:15px;line-height:15px;font-weight:bold;letter-spacing:0.700px;color:#222428;">50.00</div>
<div class="t" style="left:789.50px;top:283.00px;font-size:10.3px;line-height:10.3px;font-weight:bold;letter-spacing:0.227px;color:#2a2a2a;/*nostroke*/">Average duration</div>
<div class="t" style="-webkit-text-stroke:0.3px #222428;left:789.50px;top:297.00px;font-size:15px;line-height:15px;font-weight:bold;letter-spacing:0.114px;color:#222428;">00:01:40</div>
<div class="t" style="left:1033.30px;top:283.00px;font-size:10.3px;line-height:10.3px;font-weight:bold;letter-spacing:0.131px;color:#2a2a2a;/*nostroke*/">Total duration</div>
<div class="t" style="-webkit-text-stroke:0.3px #222428;left:1033.30px;top:297.00px;font-size:15px;line-height:15px;font-weight:bold;letter-spacing:0.000px;color:#222428;transform:scaleX(0.9533);transform-origin:0 0;">01:23:20</div>
<div class="t" style="left:1276.30px;top:283.00px;font-size:10.3px;line-height:10.3px;font-weight:bold;letter-spacing:0.213px;color:#2a2a2a;/*nostroke*/">Daily alarm time</div>
<div class="t" style="-webkit-text-stroke:0.3px #222428;left:1276.30px;top:297.00px;font-size:15px;line-height:15px;font-weight:bold;letter-spacing:0.000px;color:#222428;transform:scaleX(0.9500);transform-origin:0 0;">01:23:20</div>
<div class="t" style="left:299.50px;top:373.00px;font-size:11.5px;line-height:11.5px;font-weight:normal;letter-spacing:0.667px;color:#8e8e8e;">Code</div>
<div class="t" style="left:377.80px;top:373.00px;font-size:11.5px;line-height:11.5px;font-weight:normal;letter-spacing:0.150px;color:#8e8e8e;">Message</div>
<div class="t" style="left:677.50px;top:373.00px;font-size:11.5px;line-height:11.5px;font-weight:normal;letter-spacing:-0.100px;color:#8e8e8e;">Start</div>
<div class="t" style="left:857.40px;top:373.00px;font-size:11.5px;line-height:11.5px;font-weight:normal;letter-spacing:0.000px;color:#8e8e8e;transform:scaleX(0.8857);transform-origin:0 0;">End</div>
<div class="t" style="left:1033.50px;top:373.00px;font-size:11.5px;line-height:11.5px;font-weight:normal;letter-spacing:0.386px;color:#8e8e8e;">Duration</div>
<div class="t" style="left:1133.60px;top:373.00px;font-size:11.5px;line-height:11.5px;font-weight:normal;letter-spacing:0.371px;color:#8e8e8e;">Material</div>
<div class="t" style="left:1230.70px;top:373.00px;font-size:11.5px;line-height:11.5px;font-weight:normal;letter-spacing:0.400px;color:#8e8e8e;">Production code</div>
<div class="t" style="left:299.60px;top:419.00px;font-size:11.5px;line-height:11.5px;font-weight:bold;letter-spacing:0.350px;color:#303030;/*nostroke*/">2</div>
<div class="t" style="left:377.50px;top:419.00px;font-size:11.5px;line-height:11.5px;font-weight:bold;letter-spacing:0.200px;color:#303030;/*nostroke*/">Anomalia motore giallo sciacquatrice</div>
<div class="t" style="left:677.80px;top:419.00px;font-size:11.5px;line-height:11.5px;font-weight:normal;letter-spacing:-0.205px;color:#555555;">Apr 10, 2023 - 23:42:33</div>
<div class="t" style="left:857.30px;top:419.00px;font-size:11.5px;line-height:11.5px;font-weight:normal;letter-spacing:0.000px;color:#555555;transform:scaleX(0.9504);transform-origin:0 0;">Apr 10, 2023 - 23:44:10</div>
<div class="t" style="left:1033.50px;top:419.00px;font-size:11.5px;line-height:11.5px;font-weight:normal;letter-spacing:0.000px;color:#555555;transform:scaleX(0.9178);transform-origin:0 0;">00:01:37</div>
<div class="t" style="left:1133.50px;top:419.00px;font-size:11.5px;line-height:11.5px;font-weight:normal;letter-spacing:0.000px;color:#555555;transform:scaleX(0.9567);transform-origin:0 0;">MAT2</div>
<div class="t" style="left:1230.90px;top:419.00px;font-size:11.5px;line-height:11.5px;font-weight:normal;letter-spacing:0.000px;color:#555555;transform:scaleX(0.9359);transform-origin:0 0;">100349</div>
<div class="t" style="left:299.60px;top:472.00px;font-size:11.5px;line-height:11.5px;font-weight:bold;letter-spacing:0.350px;color:#303030;/*nostroke*/">2</div>
<div class="t" style="left:377.50px;top:472.00px;font-size:11.5px;line-height:11.5px;font-weight:bold;letter-spacing:0.200px;color:#303030;/*nostroke*/">Anomalia motore giallo sciacquatrice</div>
<div class="t" style="left:677.80px;top:472.00px;font-size:11.5px;line-height:11.5px;font-weight:normal;letter-spacing:-0.205px;color:#555555;">Apr 10, 2023 - 23:18:28</div>
<div class="t" style="left:857.30px;top:472.00px;font-size:11.5px;line-height:11.5px;font-weight:normal;letter-spacing:0.000px;color:#555555;transform:scaleX(0.9504);transform-origin:0 0;">Apr 10, 2023 - 23:20:10</div>
<div class="t" style="left:1033.50px;top:472.00px;font-size:11.5px;line-height:11.5px;font-weight:normal;letter-spacing:0.000px;color:#555555;transform:scaleX(0.9178);transform-origin:0 0;">00:01:42</div>
<div class="t" style="left:1133.50px;top:472.00px;font-size:11.5px;line-height:11.5px;font-weight:normal;letter-spacing:0.000px;color:#555555;transform:scaleX(0.9567);transform-origin:0 0;">MAT3</div>
<div class="t" style="left:1230.90px;top:472.00px;font-size:11.5px;line-height:11.5px;font-weight:normal;letter-spacing:0.000px;color:#555555;transform:scaleX(0.9500);transform-origin:0 0;">133452</div>
<div class="t" style="left:299.60px;top:524.00px;font-size:11.5px;line-height:11.5px;font-weight:bold;letter-spacing:0.350px;color:#303030;/*nostroke*/">4</div>
<div class="t" style="left:377.50px;top:524.00px;font-size:11.5px;line-height:11.5px;font-weight:bold;letter-spacing:-0.033px;color:#303030;/*nostroke*/">Rullo ostacolato</div>
<div class="t" style="left:677.80px;top:524.00px;font-size:11.5px;line-height:11.5px;font-weight:normal;letter-spacing:0.000px;color:#555555;transform:scaleX(0.9463);transform-origin:0 0;">Apr 10, 2023 - 23:05:31</div>
<div class="t" style="left:857.30px;top:524.00px;font-size:11.5px;line-height:11.5px;font-weight:normal;letter-spacing:0.000px;color:#555555;transform:scaleX(0.9421);transform-origin:0 0;">Apr 10, 2023 - 23:07:10</div>
<div class="t" style="left:1033.50px;top:524.00px;font-size:11.5px;line-height:11.5px;font-weight:normal;letter-spacing:0.000px;color:#555555;transform:scaleX(0.9178);transform-origin:0 0;">00:01:39</div>
<div class="t" style="left:1133.50px;top:524.00px;font-size:11.5px;line-height:11.5px;font-weight:normal;letter-spacing:0.000px;color:#555555;transform:scaleX(0.8700);transform-origin:0 0;">MAT1</div>
<div class="t" style="left:1230.90px;top:524.00px;font-size:11.5px;line-height:11.5px;font-weight:normal;letter-spacing:0.000px;color:#555555;transform:scaleX(0.9308);transform-origin:0 0;">176406</div>
<div class="t" style="left:299.60px;top:577.00px;font-size:11.5px;line-height:11.5px;font-weight:bold;letter-spacing:0.350px;color:#303030;/*nostroke*/">2</div>
<div class="t" style="left:377.50px;top:577.00px;font-size:11.5px;line-height:11.5px;font-weight:bold;letter-spacing:0.200px;color:#303030;/*nostroke*/">Anomalia motore giallo sciacquatrice</div>
<div class="t" style="left:677.80px;top:577.00px;font-size:11.5px;line-height:11.5px;font-weight:normal;letter-spacing:-0.118px;color:#555555;">Apr 10, 2023 - 22:56:40</div>
<div class="t" style="left:857.30px;top:577.00px;font-size:11.5px;line-height:11.5px;font-weight:normal;letter-spacing:0.000px;color:#555555;transform:scaleX(0.9504);transform-origin:0 0;">Apr 10, 2023 - 22:58:10</div>
<div class="t" style="left:1033.50px;top:577.00px;font-size:11.5px;line-height:11.5px;font-weight:normal;letter-spacing:0.000px;color:#555555;transform:scaleX(0.9178);transform-origin:0 0;">00:01:30</div>
<div class="t" style="left:1133.50px;top:577.00px;font-size:11.5px;line-height:11.5px;font-weight:normal;letter-spacing:0.000px;color:#555555;transform:scaleX(0.9567);transform-origin:0 0;">MAT2</div>
<div class="t" style="left:1230.90px;top:577.00px;font-size:11.5px;line-height:11.5px;font-weight:normal;letter-spacing:0.000px;color:#555555;transform:scaleX(0.9500);transform-origin:0 0;">133452</div>
<div class="t" style="left:299.60px;top:629.00px;font-size:11.5px;line-height:11.5px;font-weight:bold;letter-spacing:0.350px;color:#303030;/*nostroke*/">1</div>
<div class="t" style="left:377.50px;top:629.00px;font-size:11.5px;line-height:11.5px;font-weight:bold;letter-spacing:0.170px;color:#303030;/*nostroke*/">Anomalia protezioni riempitrice</div>
<div class="t" style="left:677.80px;top:629.00px;font-size:11.5px;line-height:11.5px;font-weight:normal;letter-spacing:-0.159px;color:#555555;">Apr 10, 2023 - 22:36:30</div>
<div class="t" style="left:857.30px;top:629.00px;font-size:11.5px;line-height:11.5px;font-weight:normal;letter-spacing:0.000px;color:#555555;transform:scaleX(0.9463);transform-origin:0 0;">Apr 10, 2023 - 22:38:10</div>
<div class="t" style="left:1033.50px;top:629.00px;font-size:11.5px;line-height:11.5px;font-weight:normal;letter-spacing:0.000px;color:#555555;transform:scaleX(0.9178);transform-origin:0 0;">00:01:40</div>
<div class="t" style="left:1133.50px;top:629.00px;font-size:11.5px;line-height:11.5px;font-weight:normal;letter-spacing:0.000px;color:#555555;transform:scaleX(0.9567);transform-origin:0 0;">MAT3</div>
<div class="t" style="left:1230.90px;top:629.00px;font-size:11.5px;line-height:11.5px;font-weight:normal;letter-spacing:0.000px;color:#555555;transform:scaleX(0.9500);transform-origin:0 0;">133452</div>
<div class="t" style="left:299.60px;top:681.00px;font-size:11.5px;line-height:11.5px;font-weight:bold;letter-spacing:0.350px;color:#303030;/*nostroke*/">2</div>
<div class="t" style="left:377.50px;top:681.00px;font-size:11.5px;line-height:11.5px;font-weight:bold;letter-spacing:0.200px;color:#303030;/*nostroke*/">Anomalia motore giallo sciacquatrice</div>
<div class="t" style="left:677.80px;top:681.00px;font-size:11.5px;line-height:11.5px;font-weight:normal;letter-spacing:0.000px;color:#555555;transform:scaleX(0.9397);transform-origin:0 0;">Apr 10, 2023 - 21:57:36</div>
<div class="t" style="left:857.30px;top:681.00px;font-size:11.5px;line-height:11.5px;font-weight:normal;letter-spacing:0.000px;color:#555555;transform:scaleX(0.9248);transform-origin:0 0;">Apr 10, 2023 - 21:59:10</div>
<div class="t" style="left:1033.50px;top:681.00px;font-size:11.5px;line-height:11.5px;font-weight:normal;letter-spacing:0.000px;color:#555555;transform:scaleX(0.9178);transform-origin:0 0;">00:01:34</div>
<div class="t" style="left:1133.50px;top:681.00px;font-size:11.5px;line-height:11.5px;font-weight:normal;letter-spacing:0.000px;color:#555555;transform:scaleX(0.9567);transform-origin:0 0;">MAT3</div>
<div class="t" style="left:1230.90px;top:681.00px;font-size:11.5px;line-height:11.5px;font-weight:normal;letter-spacing:0.000px;color:#555555;transform:scaleX(0.9359);transform-origin:0 0;">100349</div>
<div class="t" style="left:299.60px;top:734.00px;font-size:11.5px;line-height:11.5px;font-weight:bold;letter-spacing:0.350px;color:#303030;/*nostroke*/">2</div>
<div class="t" style="left:377.50px;top:734.00px;font-size:11.5px;line-height:11.5px;font-weight:bold;letter-spacing:0.200px;color:#303030;/*nostroke*/">Anomalia motore giallo sciacquatrice</div>
<div class="t" style="left:677.80px;top:734.00px;font-size:11.5px;line-height:11.5px;font-weight:normal;letter-spacing:0.000px;color:#555555;transform:scaleX(0.9174);transform-origin:0 0;">Apr 10, 2023 - 21:12:25</div>
<div class="t" style="left:857.30px;top:734.00px;font-size:11.5px;line-height:11.5px;font-weight:normal;letter-spacing:0.000px;color:#555555;transform:scaleX(0.8992);transform-origin:0 0;">Apr 10, 2023 - 21:14:10</div>
<div class="t" style="left:1033.50px;top:734.00px;font-size:11.5px;line-height:11.5px;font-weight:normal;letter-spacing:0.000px;color:#555555;transform:scaleX(0.9178);transform-origin:0 0;">00:01:45</div>
<div class="t" style="left:1133.50px;top:734.00px;font-size:11.5px;line-height:11.5px;font-weight:normal;letter-spacing:0.000px;color:#555555;transform:scaleX(0.9567);transform-origin:0 0;">MAT2</div>
<div class="t" style="left:1230.90px;top:734.00px;font-size:11.5px;line-height:11.5px;font-weight:normal;letter-spacing:0.000px;color:#555555;transform:scaleX(0.9359);transform-origin:0 0;">100349</div>
<div class="t" style="left:299.60px;top:786.00px;font-size:11.5px;line-height:11.5px;font-weight:bold;letter-spacing:0.350px;color:#303030;/*nostroke*/">4</div>
<div class="t" style="left:377.50px;top:786.00px;font-size:11.5px;line-height:11.5px;font-weight:bold;letter-spacing:-0.033px;color:#303030;/*nostroke*/">Rullo ostacolato</div>
<div class="t" style="left:677.80px;top:786.00px;font-size:11.5px;line-height:11.5px;font-weight:normal;letter-spacing:-0.159px;color:#555555;">Apr 10, 2023 - 20:57:35</div>
<div class="t" style="left:857.30px;top:786.00px;font-size:11.5px;line-height:11.5px;font-weight:normal;letter-spacing:0.000px;color:#555555;transform:scaleX(0.9537);transform-origin:0 0;">Apr 10, 2023 - 20:59:10</div>
<div class="t" style="left:1033.50px;top:786.00px;font-size:11.5px;line-height:11.5px;font-weight:normal;letter-spacing:0.000px;color:#555555;transform:scaleX(0.9178);transform-origin:0 0;">00:01:35</div>
<div class="t" style="left:1133.50px;top:786.00px;font-size:11.5px;line-height:11.5px;font-weight:normal;letter-spacing:0.000px;color:#555555;transform:scaleX(0.9567);transform-origin:0 0;">MAT3</div>
<div class="t" style="left:1230.90px;top:786.00px;font-size:11.5px;line-height:11.5px;font-weight:normal;letter-spacing:0.000px;color:#555555;transform:scaleX(0.9500);transform-origin:0 0;">133452</div>
</body></html>
